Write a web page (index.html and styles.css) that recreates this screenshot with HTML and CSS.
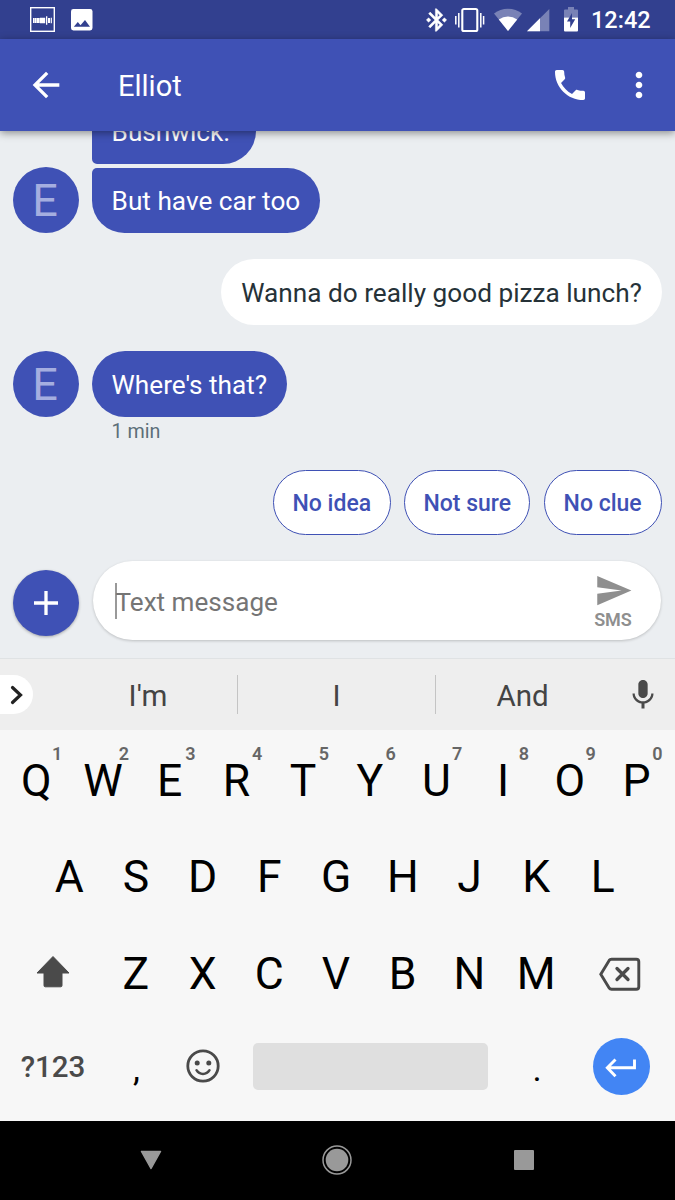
FILE: index.html
```html
<!DOCTYPE html>
<html lang="en">
<head>
<meta charset="utf-8">
<title>Elliot</title>
<link rel="stylesheet" href="styles.css">
</head>
<body>
<div class="phone">
  <header class="status">
    <div class="status-left">
      <svg width="25" height="25" viewBox="0 0 25 25"><rect x=".7" y=".7" width="23.6" height="23.6" fill="none" stroke="#fff" stroke-width="1.4"/><g fill="#fff"><path d="M3 11h1v5H3zM4.300 11h2.400v5H4.300zM7 11h2.600v5H7zM9.900 10.700h5.300v5.600H9.900zM16 9.300h1.300v8.400H16zM18 11h2v5h-2zM20.700 10.700h1.200v5.600h-1.200z"/></g></svg>
      <svg width="22" height="22" viewBox="0 0 22 22"><rect width="21.500" height="21.500" rx="2.400" fill="#fff"/><path d="M2.800 17.700L6.800 13l2.700 3.200 4.500-5.200 5 6.700z" fill="#32408f"/></svg>
    </div>
    <div class="status-right">
      <svg class="bt" width="21" height="24" viewBox="2.700 1.500 18.600 21"><path fill="#fff" stroke="#fff" stroke-width=".4" d="M7 12l-2-2-2 2 2 2 2-2zm10.710-4.290L12 2h-1v7.590L6.410 5 5 6.410 10.590 12 5 17.590 6.410 19 11 14.410V22h1l5.710-5.710-4.300-4.290 4.300-4.290zM13 5.830l1.880 1.880L13 9.590V5.830zm1.880 10.460L13 18.170v-3.760l1.880 1.880zM19 10l-2 2 2 2 2-2-2-2z"/></svg>
      <svg class="vib" width="30" height="26" viewBox="0 0 30 26"><rect x="7.300" y="2" width="15" height="22" rx="1.600" fill="none" stroke="#fff" stroke-width="2.100"/><path d="M.8 9v8.500M3.800 6v14.500M25.800 6v14.500M28.600 9v8.500" stroke="#fff" stroke-width="1.500"/></svg>
      <svg class="wifi" width="28" height="24" viewBox="0 0 28 24"><path d="M14 23L0 5.500Q6 .8 14 .8t14 4.700z" fill="#fff" opacity=".35"/><path d="M14 23L4.800 11.500Q9 8.600 14 8.600t9.200 2.900z" fill="#fff"/></svg>
      <svg class="signal" width="23" height="24" viewBox="0 0 23 24"><path d="M0 23.200L22.300 1v22.200z" fill="#fff" opacity=".35"/><path d="M0 23.200L13 10.200v13z" fill="#fff"/></svg>
      <svg class="battery" width="14" height="25" viewBox="0 0 14 25"><path d="M0 10.500V3.500q0-1 1-1h3V0h6v2.500h3q1 0 1 1v7z" fill="#fff" opacity=".35"/><path d="M0 10.500h14v13q0 1-1 1H1q-1 0-1-1z" fill="#fff"/><path d="M8 6L3 14.500h3.200V21l5-8.800H8z" fill="#32408f"/></svg>
      <span class="clock">12:42</span>
    </div>
  </header>

  <nav class="appbar">
    <svg class="back" width="40" height="40" viewBox="0 0 24 24"><path fill="#fff" d="M20 11H7.830l5.590-5.590L12 4l-8 8 8 8 1.410-1.410L7.830 13H20v-2z"/></svg>
    <h1 class="contact">Elliot</h1>
    <svg class="call" width="40" height="40" viewBox="0 0 24 24"><path fill="#fff" d="M6.620 10.790c1.440 2.830 3.760 5.140 6.590 6.590l2.200-2.200c.27-.27.67-.36 1.020-.24 1.120.37 2.330.57 3.570.57.55 0 1 .45 1 1V20c0 .55-.45 1-1 1-9.390 0-17-7.610-17-17 0-.55.45-1 1-1h3.500c.55 0 1 .45 1 1 0 1.250.2 2.450.57 3.570.11.350.03.740-.25 1.020l-2.200 2.200z"/></svg>
    <svg class="more" width="40" height="40" viewBox="0 0 24 24"><path fill="#fff" d="M12 8c1.100 0 2-.9 2-2s-.9-2-2-2-2 .9-2 2 .9 2 2 2zm0 2c-1.100 0-2 .9-2 2s.9 2 2 2 2-.9 2-2-.9-2-2-2zm0 6c-1.100 0-2 .9-2 2s.9 2 2 2 2-.9 2-2-.9-2-2-2z"/></svg>
  </nav>

  <main class="chat">
    <div class="row first"><div class="bubble in group-top">Bushwick.&nbsp;</div></div>
    <div class="row second"><div class="avatar">E</div><div class="bubble in group-end">But have car too</div></div>
    <div class="row mine"><div class="bubble out">Wanna do really good pizza lunch?</div></div>
    <div class="row third"><div class="avatar">E</div><div class="bubble in">Where's that?</div></div>
    <div class="time">1 min</div>
    <div class="chips"><button class="chip">No idea</button><button class="chip wide">Not sure</button><button class="chip">No clue</button></div>
    <div class="compose">
      <button class="add"><svg width="24" height="24" viewBox="0 0 24 24"><path d="M12 0v24M0 12h24" stroke="#fff" stroke-width="3.300"/></svg></button>
      <div class="field">
        <span class="caret"></span><span class="placeholder">Text message</span>
        <div class="send"><svg width="39" height="39" viewBox="0 0 24 24"><path fill="#8f8f8f" d="M2.010 21L23 12 2.010 3 2 10l15 2-15 2z"/></svg><span class="sms">SMS</span></div>
      </div>
    </div>
  </main>

  <section class="suggest">
    <div class="expand"><svg width="14" height="20" viewBox="0 0 14 20"><path d="M2.500 2.500L10.500 10l-8 7.500" fill="none" stroke="#222" stroke-width="3.200" stroke-linecap="round"/></svg></div>
    <div class="word">I'm</div><div class="word ruled">I</div><div class="word ruled">And</div>
    <div class="mic"><svg width="36" height="36" viewBox="0 0 24 24"><path fill="#4a4a4a" d="M12 14c1.660 0 3.100-1.340 3.100-3V5c0-1.660-1.440-3-3.100-3S8.900 3.340 8.900 5v6c0 1.660 1.440 3 3.100 3zm5.500-3c0 3-2.740 5.200-5.500 5.200S6.500 14 6.500 11H5c0 3.410 2.720 6.230 6 6.720V21h2v-3.280c3.280-.48 6-3.300 6-6.720h-1.500z"/></svg></div>
  </section>

  <section class="keys">
    <div class="krow r1">
      <div class="key">Q<sup>1</sup></div><div class="key">W<sup>2</sup></div><div class="key">E<sup>3</sup></div><div class="key">R<sup>4</sup></div><div class="key">T<sup>5</sup></div><div class="key">Y<sup>6</sup></div><div class="key">U<sup>7</sup></div><div class="key">I<sup>8</sup></div><div class="key">O<sup>9</sup></div><div class="key">P<sup>0</sup></div>
    </div>
    <div class="krow r2">
      <div class="key">A</div><div class="key">S</div><div class="key">D</div><div class="key">F</div><div class="key">G</div><div class="key">H</div><div class="key">J</div><div class="key">K</div><div class="key">L</div>
    </div>
    <div class="krow r3">
      <div class="key shift"><svg width="36" height="34" viewBox="0 0 36 34"><path d="M18 1.500L34 18h-7v12.500a1.300 1.300 0 0 1-1.300 1.300H10.300A1.300 1.300 0 0 1 9 30.500V18H2z" fill="#4a4a4a" stroke="#4a4a4a" stroke-linejoin="round"/></svg></div>
      <div class="key">Z</div><div class="key">X</div><div class="key">C</div><div class="key">V</div><div class="key">B</div><div class="key">N</div><div class="key">M</div>
      <div class="key del"><svg width="42" height="34" viewBox="0 0 42 34"><g fill="none" stroke="#4a4a4a" stroke-width="2.900"><path d="M12.500 2.200H37.300a2.500 2.500 0 0 1 2.500 2.500V29.700a2.500 2.500 0 0 1-2.500 2.500H12.500q-1.500 0-2.200-1L1.800 17.200 10.300 3.200q.7-1 2.200-1z"/><path d="M18 11.500l11 11M29 11.500l-11 11" stroke-width="3.300" stroke-linecap="round"/></g></svg></div>
    </div>
    <div class="krow r4">
      <div class="key sym">?123</div>
      <div class="key punct">,</div>
      <div class="key emoji"><svg width="34" height="34" viewBox="0 0 34 34"><circle cx="17" cy="17" r="15.200" fill="none" stroke="#4a4a4a" stroke-width="2.800"/><circle cx="11.200" cy="14" r="2.500" fill="#4a4a4a"/><circle cx="22.800" cy="14" r="2.500" fill="#4a4a4a"/><path d="M10.500 21.200q2.300 3.700 6.500 3.700t6.500-3.700" fill="none" stroke="#4a4a4a" stroke-width="2.500" stroke-linecap="round"/></svg></div>
      <div class="space"></div>
      <div class="key punct dot">.</div>
      <div class="enter"><svg width="32" height="20" viewBox="0 0 32 20"><path d="M29.500 1.500v8.300H2.500M10.500 1.500L2.300 9.800l8.200 8.500" fill="none" stroke="#fff" stroke-width="2.900"/></svg></div>
    </div>
  </section>

  <footer class="nav">
    <svg class="tri" width="22" height="20" viewBox="0 0 22 20"><path d="M1.500 1.500h19L11 18.500z" fill="#999" stroke="#999" stroke-width="1.500" stroke-linejoin="round"/></svg>
    <svg class="home" width="30" height="30" viewBox="0 0 30 30"><circle cx="15" cy="15" r="14" fill="none" stroke="#999" stroke-width="1.500"/><circle cx="15" cy="15" r="11.300" fill="#999"/></svg>
    <svg class="recent" width="20" height="20" viewBox="0 0 20 20"><rect width="20" height="20" rx="1" fill="#999"/></svg>
  </footer>
</div>
</body>
</html>
```

FILE: styles.css
```css
* { box-sizing: border-box; }
body { margin: 0; font-family: Roboto, "Liberation Sans", sans-serif; }
svg { display: block; flex: none; }
button { font: inherit; padding: 0; margin: 0; }

.phone { width: 675px; height: 1200px; overflow: hidden; display: flex; flex-direction: column; background: #ebeef1; }

.status { height: 39px; flex: none; background: #32408f; display: flex; justify-content: space-between; align-items: center; padding: 0 26px 0 30px; }
.status-left { display: flex; align-items: center; gap: 16px; }
.status-right { display: flex; align-items: center; }
.bt { margin-right: 8px; }
.vib { margin-right: 9.500px; }
.wifi { margin-right: 4.500px; }
.signal { margin-right: 14.500px; }
.battery { margin-right: 13px; }
.clock { color: #fff; font-size: 23.500px; font-weight: 500; line-height: 39px; padding-top: 2px; width: 58px; white-space: nowrap; }

.appbar { height: 92px; flex: none; background: #3f51b5; display: flex; align-items: center; padding: 0 16px 0 26px; position: relative; z-index: 2; box-shadow: 0 2px 8px rgba(0, 0, 0, .42); }
.contact { margin: 2px 0 0 52px; flex: 1; color: #fff; font-size: 29px; font-weight: 400; }
.call { margin-right: 29px; }

.chat { height: 527px; flex: none; overflow: hidden; background: #ebeef1; }
.row { display: flex; align-items: center; padding: 0 13px; gap: 13px; height: 65.600px; }
.first { margin-top: -33px; padding-left: 92px; }
.second { margin-top: 4px; }
.mine { margin-top: 26.300px; justify-content: flex-end; }
.third { margin-top: 26.300px; }
.bubble { height: 65.600px; line-height: 65.600px; padding: 1.300px 20px 0; border-radius: 33px; font-size: 26.200px; white-space: nowrap; }
.in { background: #3f51b5; color: #fff; padding-left: 19.600px; padding-right: 19.600px; }
.out { background: #fff; color: #263238; }
.group-top { border-bottom-left-radius: 5px; padding-top: 2.300px; }
.group-end { border-top-left-radius: 5px; }
.avatar { width: 66px; height: 66px; border-radius: 50%; background: #3f51b5; color: #a5aee0; font-size: 45px; line-height: 67px; text-align: center; padding-right: 2px; }
.time { padding-left: 111.500px; margin-top: 3px; height: 24px; line-height: 24px; font-size: 19.700px; color: #5c6f79; }

.chips { display: flex; justify-content: flex-end; gap: 13.500px; padding-right: 13.500px; margin-top: 26.500px; }
.chip { width: 117.800px; height: 65px; border: 1.500px solid #3f51b5; border-radius: 33px; background: #fff; color: #3f51b5; font-size: 23px; font-weight: 500; padding-top: 2px; white-space: nowrap; }
.chip.wide { width: 126px; }

.compose { display: flex; align-items: center; padding: 0 14px 0 13px; gap: 14px; margin-top: 26px; }
.add { width: 66px; height: 66px; margin-top: 4px; border: 0; border-radius: 50%; background: #3f51b5; display: grid; place-items: center; box-shadow: 0 1px 3px rgba(0, 0, 0, .3); }
.field { flex: 1; height: 79px; border-radius: 40px; background: #fff; display: flex; align-items: center; padding: 0 28.500px 0 22px; box-shadow: 0 1px 3px rgba(0, 0, 0, .2); }
.caret { width: 1.500px; height: 36px; background: #999; }
.placeholder { flex: 1; font-size: 26.100px; color: #757575; padding-top: 2px; margin-left: -1px; }
.send { display: flex; flex-direction: column; align-items: center; margin-top: -1px; }
.sms { font-size: 18px; line-height: 20px; font-weight: 600; color: #8f8f8f; }

.suggest { height: 72px; flex: none; background: #eee; border-top: 1px solid #dfe2e4; display: grid; grid-template-columns: 59px 178px 198px 174px 66px; align-items: center; }
.expand { width: 33px; height: 39px; background: #fff; border-radius: 0 20px 20px 0; padding-left: 10px; display: flex; align-items: center; }
.word { height: 39px; line-height: 42px; font-size: 29.500px; color: #444; text-align: center; }
.ruled { border-left: 1.500px solid #c4c4c4; }
.mic { display: grid; justify-content: center; padding-left: 1px; }

.keys { height: 391px; flex: none; background: #f7f7f7; padding-top: 2.300px; }
.krow { height: 96.600px; display: flex; align-items: center; }
.key { width: 66.700px; height: 100%; display: grid; place-items: center; position: relative; font-size: 44.500px; color: #000; line-height: 1; padding-top: 1px; }
.key sup { position: absolute; left: 0; right: 0; top: 12px; padding-left: 41.500px; text-align: center; font-size: 18px; line-height: 20px; font-weight: 600; color: #666; }
.r1 { padding-left: 3px; }
.r2 { padding-left: 36px; }
.key.shift { width: 102.600px; padding: 0 0 3px 3px; }
.key.del { width: 101.500px; padding-top: 0; }
.r4 { height: 88.800px; }
.key.sym { width: 103px; font-size: 29.500px; font-weight: 500; color: #4a4a4a; padding-left: 3px; padding-top: 2px; }
.key.punct { font-size: 35px; padding-top: 7px; }
.key.emoji { padding: 0 0 1px; }
.space { width: 235px; height: 47px; margin-left: 16.500px; border-radius: 5px; background: #dfdfdf; }
.key.dot { margin-left: 16px; }
.enter { width: 57px; height: 57px; margin-left: 22px; border-radius: 50%; background: #4285f4; display: grid; place-items: center; padding-top: 4px; }

.nav { height: 79px; flex: none; background: #000; display: flex; align-items: center; padding: 0 0 1px 139.500px; }
.home { margin-left: 160.500px; }
.recent { margin-left: 162px; }
```
